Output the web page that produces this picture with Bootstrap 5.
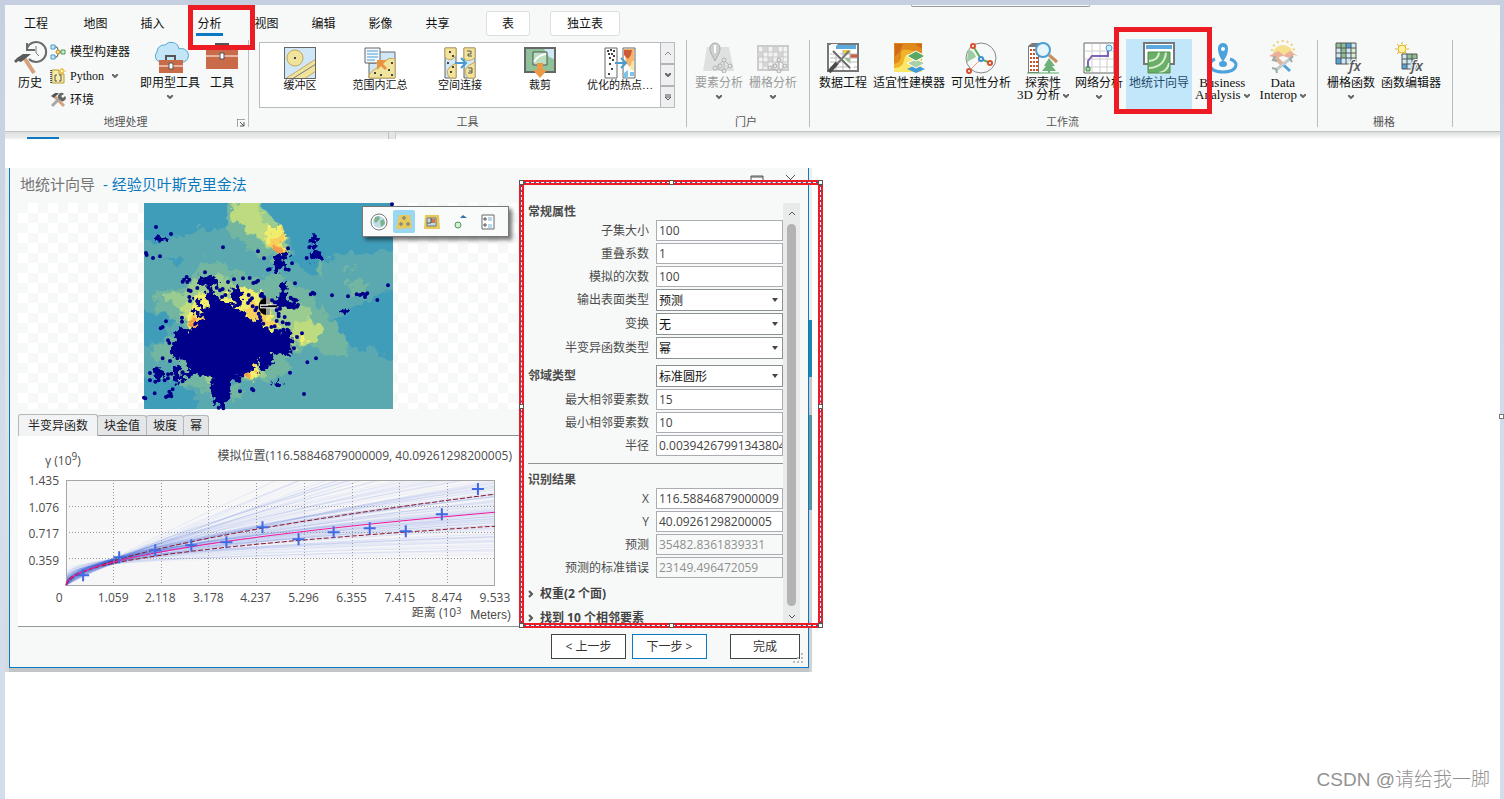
<!DOCTYPE html>
<html lang="zh-CN">
<head>
<meta charset="utf-8">
<meta name="viewport" content="width=device-width, initial-scale=1">
<title>地统计向导</title>
<link rel="stylesheet" href="https://cdn.jsdelivr.net/npm/bootstrap@5.3.0/dist/css/bootstrap.min.css">
<style>
:root{--line:#b9bdbf;--panel:#f7f9f8;--ink:#4c4c4c;--red:#ed1c24;--blue:#0a78c2}
body{background:linear-gradient(#c6cfe0,#d3ddec 60%);font-family:"Open Sans","Noto Sans CJK SC",sans-serif;font-size:12px;line-height:16px;color:#111;padding:5px 4px 0 5px}
button{font-family:inherit;color:inherit}
svg{display:block}
.ribbon{background:var(--panel);border-bottom:1px solid #bfc3c4;height:127px;font-family:"Liberation Serif","Noto Sans CJK SC",serif}
.searchstub{top:0;left:906px;width:179px;height:2px;border:1px solid #999;border-top:0;border-radius:0 0 3px 3px}
.tabrow{height:35px}
.tabrow .nav-link{width:57px;height:35px;padding:0;font-size:12px;line-height:38px;text-align:center;color:#111}
.tabrow .firsttab{width:62px}
.tabrow .nav-link.active span{display:inline-block;height:31px;border-bottom:3px solid var(--blue);padding:0 1px}
.tabrow .ctxtab{width:44px;height:25px;line-height:25px;background:#fff;border:1px solid #dcdedf;border-radius:3px;margin:6px 0 0 20px}
.tabrow .ctxwide{width:70px}
.redbox{border:5px solid var(--red);pointer-events:none;z-index:5}
.around-tab{left:7px;top:0;width:67px;height:45px}
.around-btn{left:-12px;top:-12px;width:98px;height:87px}
.rgroup{border-right:1px solid var(--line);height:87px}
.g-geo{padding:0 7px 0 5px}
.g-portal{padding:0 9px 0 5px}
.g-flow{padding:0 8px 0 6px}
.g-raster{padding:0 8px 0 6px}
.grow{height:72px}
.gname{font-size:11px;line-height:14px;color:#555;text-align:center;padding-top:3px}
.rbtn{background:none;border:0;padding:2px 3px 0;font-size:12px;line-height:12px;white-space:nowrap;display:flex;flex-direction:column;align-items:center;height:70px}
.rbtn svg.ic{margin-bottom:3px;flex:none;overflow:visible}
.lat{font-size:13px}
.rbtn.off{color:#9a9a9a}
.rbtn.hot{background:#c3e7fa;color:#1d4a6b;margin-top:-1px;padding-top:3px}
.sbtn{background:none;border:0;padding:0;height:24px;font-size:12px;display:flex;align-items:center;gap:4px;white-space:nowrap}
.smallcol{padding-right:7px}
.chev{width:6px;height:4px;flex:none}
.rbtn>.chev{margin-top:6px}
.rbtn span .chev{display:inline-block;margin-left:3px}
.launch{right:3px;bottom:0}
.gallery{border:1px solid #b9bcbd;background:#fff;height:66px;margin:2px 11px 0 10px}
.gitem{background:none;border:0;width:80px;padding:4px 0 0;font-size:11px;line-height:13px;white-space:nowrap;display:flex;flex-direction:column;align-items:center}
.gscroll button{border:0;border-left:1px solid #b0b4b8;background:#efeff1;width:14px;height:21px;padding:0;flex:1 1 0;display:flex;align-items:center;justify-content:center}
.gscroll button+button{border-top:2px solid #b0b4b8}
.understrip{height:7px;background:linear-gradient(#dadcdc,#fff)}
.understrip .pane{width:383px;background:linear-gradient(#dcdede,#f0f1f1);padding-left:22px}
.understrip .pane i{display:block;width:32px;height:2px;margin-top:5px;background:var(--blue)}
.understrip .split{width:8px;border-left:1px solid #c0c0c0;border-right:1px solid #d0d0d0;background:#e4e4e4}
.desk{background:#fff}
.backdrop{margin-top:29px;max-width:807px;padding:0 3px 4px 4px;background:linear-gradient(#e8e9ea,#d8d9da) left/4px 100% no-repeat,linear-gradient(#eeeff0 152px,#2484b0 152px 209px,#c8c8c8 209px 247px,#5d949e 247px 342px,#d2d2d2 342px) right/3px 100% no-repeat,#c3c4c5}
.dlg{background:var(--panel);border:1px solid var(--blue);border-top:0;color:var(--ink)}
.dlghead{height:35px;padding:0 10px;font-size:15px;line-height:32px;color:#757575}
.dlghead b{font-weight:400;color:#0a78be}
.leftcol{margin-left:8px;min-width:0}
.checker{height:206px;background:conic-gradient(#fff 25%,#f7f9f8 0 50%,#fff 0 75%,#f7f9f8 0) 0 0/20px 20px}
.mapbar{left:344px;top:3px;width:147px;height:31px;background:#f9fafa;border:1px solid #777;box-shadow:3px 3px 4px #0008;padding:0 5px;gap:6px}
.mapbar button{border:0;background:none;width:22px;height:23px;padding:2px 0;display:flex;justify-content:center;align-items:center;border-radius:2px}
.mapbar .on{background:#9ad7f3;margin-left:-3px}
.ctabs{height:27px;border-bottom:1px solid #8a8e90}
.ctabs button{border:1px solid #b5b8ba;border-bottom:0;border-radius:3px 3px 0 0;background:#e5e6e8;height:20px;padding:0 6px;font-size:12px;line-height:19px;margin-left:-1px;color:#222}
.ctabs button.active{height:22px;margin:0 0 -1px;padding:0 9px;background:#f2f3f4;line-height:21px}
.chartbox{background:#fff;border-bottom:1px solid #999}
.chartbox svg{width:100%;height:auto}
.props{width:289px;flex:none;height:424px}
.frame{left:0;top:-23px;width:304px;height:448px;border:5px solid var(--red);pointer-events:none;z-index:4}
.frame::before{content:"";position:absolute;inset:-3px;border:1px solid #2a5fa8}
.frame::after{content:"";position:absolute;inset:-3px;border:1px dashed #fff}
.frame i{position:absolute;width:5px;height:5px;background:#fff;border:1px solid #555;z-index:1}
.pform{padding:0 0 0 9px;width:264px}
.pform h2{font-size:12px;line-height:17px;font-weight:700;margin:0;height:17px}
.prow{display:grid;grid-template-columns:1fr 127px;column-gap:7px;margin-bottom:2px;align-items:center}
.prow label{text-align:right;line-height:20px}
.prow label.fw-bold{text-align:left}
.prow input,.prow select{width:100%;height:21px;border:1px solid #abadb3;border-radius:0;padding:0 0 0 2px;font-size:12px;line-height:19px;color:#444;background-color:#fff;outline:0}
.prow select{height:22px;color:#111;border-color:#8c9196;appearance:none;background:url("data:image/svg+xml,%3Csvg xmlns='http://www.w3.org/2000/svg' viewBox='0 0 6 4'%3E%3Cpath d='M0 0h6L3 4z' fill='%23444'/%3E%3C/svg%3E") right 4px top 8px/6px 4px no-repeat #fff}
.prow input:disabled{color:#8f8f8f;background:#f7f9f8}
.rule{border-top:1px solid #8f9496;margin:7px 0}
.pform .exp{border:0;background:none;padding:0;height:24px;font-size:12px;font-weight:700;display:flex;align-items:center;gap:5px;color:#444}
.vbar{width:17px;background:#e9eaea}
.vbar i{display:block;width:9px;background:#b3b3b3;border-radius:5px;flex:1}
.actions{height:40px;padding:7px 8px 0 0}
.actions button{height:25px;border:1px solid #444;border-radius:0;background:#fff;width:75px;padding:0;font-size:12px;line-height:20px;margin-right:6px;color:#333}
.actions .primary{border-color:#0a78c2;margin-right:23px}
.actions .last{width:70px;margin-right:0}
.grip{right:4px;bottom:3px}
.watermark{right:10px;bottom:6px;font-size:19px;line-height:26px;color:#929292;font-family:"Liberation Sans","Noto Sans CJK SC",sans-serif;font-weight:300}
.edgemark{right:-4px;bottom:380px;width:5px;height:5px;border:1px solid #777;background:#fff}
</style>
<script src="https://cdn.jsdelivr.net/npm/bootstrap@5.3.0/dist/js/bootstrap.bundle.min.js"></script>
</head>
<body class="d-flex flex-column min-vh-100">
<svg width="0" height="0" class="position-absolute" aria-hidden="true">
<symbol id="cv" viewBox="0 0 6 4"><path d="M0 0l3 3 3-3" fill="none" stroke="#666" stroke-width="2"/></symbol>
<symbol id="net" viewBox="0 0 22 16"><path d="M3 11L12 3M12 3l6 6M3 11l9 3 6-5M12 3v11" fill="none" stroke="#b5b5b5"/><g fill="#e4e4e4" stroke="#b0b0b0"><circle cx="12" cy="3" r="2"/><circle cx="3" cy="11" r="2"/><circle cx="18" cy="9" r="2"/><circle cx="12" cy="14" r="2"/><circle cx="8" cy="9" r="2"/></g></symbol>
</svg>
<header class="ribbon position-relative">
  <div class="searchstub position-absolute"></div>
  <nav class="nav tabrow flex-nowrap" aria-label="功能区">
    <a class="nav-link firsttab" href="#">工程</a><a class="nav-link" href="#">地图</a><a class="nav-link" href="#">插入</a>
    <a class="nav-link active position-relative" href="#"><span>分析</span><i class="redbox around-tab position-absolute"></i></a>
    <a class="nav-link" href="#">视图</a><a class="nav-link" href="#">编辑</a><a class="nav-link" href="#">影像</a><a class="nav-link" href="#">共享</a>
    <a class="nav-link ctxtab" href="#">表</a><a class="nav-link ctxtab ctxwide" href="#">独立表</a>
  </nav>
  <div class="d-flex">
    <section class="rgroup g-geo position-relative">
      <div class="grow d-flex">
        <button class="rbtn" type="button"><svg class="ic" width="34" height="32" viewBox="0 0 34 32"><path d="M14 6a10 10 0 1 1 2 11" fill="none" stroke="#6b6b6b" stroke-width="2"/><path d="M14 1v7h8" fill="none" stroke="#6b6b6b" stroke-width="2"/><path d="M23 4v7l3 3" fill="none" stroke="#777" stroke-width="1"/><path d="M12 17l9 14" stroke="#d8a07a" stroke-width="4"/><path d="M1 19l3-3 6-4h8l-6 5-4 3-3-1-2 2z" fill="#5a5a5a"/></svg>历史</button>
        <div class="smallcol d-flex flex-column">
          <button class="sbtn" type="button"><svg width="16" height="16" viewBox="0 0 16 16"><path d="M4 3h3l2 5M4 13h3l2-5h3" fill="none" stroke="#555"/><path d="M1 1h4v4H1zM1 11h4v4H1z" fill="#c7e8fa" stroke="#4a9bc9"/><circle cx="8" cy="8" r="2" fill="#efd783" stroke="#b8962e"/><path d="M11 6h4v4h-4z" fill="#cfeac9" stroke="#4f9a52"/></svg>模型构建器</button>
          <button class="sbtn lat" type="button"><svg width="16" height="16" viewBox="0 0 16 16"><path d="M2 2h7v4h5v9H2z" fill="#f5ecab" stroke="#b79d32"/><path d="M1 2v13" stroke="#555" stroke-width="2" stroke-dasharray="1 1"/><path d="M7 7H5v6h2M9 7h2v6H9" fill="none" stroke="#555"/><circle cx="12" cy="3" r="2" fill="#fff3a8" stroke="#e3b022"/><path d="M12 0v1M12 5v2M9 3H8M15 3h1" stroke="#e3b022"/></svg>Python<svg class="chev ms-1"><use href="#cv"/></svg></button>
          <button class="sbtn" type="button"><svg width="16" height="16" viewBox="0 0 16 16"><path d="M5 5l9 9" stroke="#d8a07a" stroke-width="3"/><path d="M1 4l4-3h4L6 4 4 6z" fill="#555"/><path d="M2 14l8-8" stroke="#a7a7a7" stroke-width="3"/><path d="M9 7a3 3 0 1 1 5-5l-3 2 2 2 2-2a3 3 0 0 1-5 4z" fill="#666"/></svg>环境</button>
        </div>
        <button class="rbtn" type="button"><svg class="ic" width="34" height="32" viewBox="0 0 34 32"><path d="M7 20a6 6 0 0 1-3-10 7 7 0 0 1 8-7 8 8 0 0 1 14 4 6 6 0 0 1 5 13z" fill="#c3e5f8" stroke="#5aa5d0"/><path d="M13 18v-4h9v4" fill="none" stroke="#555" stroke-width="2"/><path d="M6 18h24v13H6z" fill="#c96a49"/><path d="M6 24h24" stroke="#fff"/><path d="M16 21h4v6h-4z" fill="#fff" stroke="#555"/></svg>即用型工具<svg class="chev"><use href="#cv"/></svg></button>
        <button class="rbtn" type="button"><svg class="ic" width="32" height="32" viewBox="0 0 32 32"><path d="M10 8V2h12v6" fill="none" stroke="#555" stroke-width="2"/><path d="M0 8h32v19H0z" fill="#c96a49"/><path d="M0 14h32" stroke="#fff"/><path d="M14 11h4v6h-4z" fill="#fff" stroke="#555"/></svg>工具</button>
      </div>
      <div class="gname">地理处理</div>
      <svg class="launch position-absolute" width="8" height="8" viewBox="0 0 8 8"><path d="M0 8V0h8M3 3l4 4M7 3v4H3" fill="none" stroke="#555"/></svg>
    </section>
    <section class="rgroup">
      <div class="grow overflow-hidden">
        <div class="gallery d-flex">
          <button class="gitem" type="button"><svg width="32" height="32" viewBox="0 0 32 32"><path d="M0 0h32v32H0z" fill="#cfe7f7"/><circle cx="11" cy="11" r="8" fill="#f0e49c" stroke="#c7a65c"/><path d="M1 32l31-20v12L20 32z" fill="#f0e49c" stroke="#c7a65c"/><path d="M8 32l24-15" stroke="#777"/><path d="M10 10h2v2h-2z" fill="#444"/><path d="M0 0h32v32H0z" fill="none" stroke="#666" stroke-width="2"/></svg>缓冲区</button>
          <button class="gitem" type="button"><svg width="32" height="32" viewBox="0 0 32 32"><path d="M12 5h19v26H5V16h7z" fill="#cfe7f7" stroke="#666"/><path d="M5 31c0-8 8-9 12-13s6-8 14-6v19z" fill="#f0e49c" stroke="#c7a65c"/><path d="M1 1h15v15H1z" fill="#f4f9fd" stroke="#666"/><path d="M3 4h11M3 7h11M3 10h11M3 13h8" stroke="#4a9bd0"/><path d="M22 22l-7-7" stroke="#e8943f" stroke-width="3"/><path d="M13 13h10l-10 10z" fill="#e8943f"/><path d="M27 15h2v2h-2zM24 22h2v2h-2zM10 25h2v2h-2zM16 27h2v2h-2zM27 27h2v2h-2z" fill="#444"/></svg>范围内汇总</button>
          <button class="gitem" type="button"><svg width="32" height="32" viewBox="0 0 32 32"><path d="M1 1h11v30H1zM20 1h11v30H20z" fill="#cfe7f7" stroke="#666"/><path d="M1 1h11v8q-6 7-11 1zM12 16v15H6q-8-8 6-15zM20 1h11v10q-8 5-11 0zM31 15v16h-7q-9-9 7-16z" fill="#f0e49c" stroke="#c7a65c"/><path d="M5 4h2v2H5zM8 8h2v2H8zM3 15h2v2H3zM8 19h2v2H8zM6 24h2v2H6z" fill="#444"/><path d="M23 4h4v3h-3v2h4M24 21h4v3h-3M28 24v2h-4" fill="none" stroke="#555"/><path d="M11 16h10M17 11l5 5-5 5" fill="none" stroke="#4a9bd0" stroke-width="2"/></svg>空间连接</button>
          <button class="gitem" type="button"><svg width="32" height="32" viewBox="0 0 32 32"><path d="M1 1h30v24H1z" fill="#8fc19a" stroke="#666" stroke-width="2"/><path d="M20 2h10v10l-5-2z" fill="#cfeaf7"/><path d="M9 5h14v13H9z" fill="#b9dfc0" stroke="#555"/><path d="M10 15q4-7 12-8" fill="none" stroke="#fff" stroke-width="2"/><path d="M13 16h6v7h4l-7 8-7-8h4z" fill="#ee9a45"/></svg>裁剪</button>
          <button class="gitem" type="button"><svg width="32" height="32" viewBox="0 0 32 32"><path d="M1 1h12v30H1zM19 1h12v30H19z" fill="#fff" stroke="#666"/><path d="M3 3h2v2H3zM6 2h2v2H6zM9 3h2v2H9zM4 6h2v2H4zM7 6h2v2H7zM9 8h2v2H9zM5 10h2v2H5zM8 12h2v2H8zM5 16h2v2H5zM7 21h2v2H7zM4 26h2v2H4z" fill="#444"/><path d="M20 2h10v12l-4 6-4-4z" fill="#f5b56b"/><path d="M20 3h8l-1 5-3 4-4-4z" fill="#cc5a38"/><path d="M28 14h2v10l-4-2z" fill="#f8e7a3"/><path d="M20 26l4-3v8h-4zM26 25h4v4h-4z" fill="#7fc2ea"/><path d="M11 16h10M17 11l5 5-5 5" fill="none" stroke="#4a9bd0" stroke-width="2"/></svg>优化的热点…</button>
          <div class="gscroll d-flex flex-column ms-auto">
            <button type="button" aria-label="上"><svg width="6" height="4" viewBox="0 0 6 4"><path d="M0 4l3-3 3 3" fill="none" stroke="#888"/></svg></button>
            <button type="button" aria-label="下"><svg class="chev"><use href="#cv"/></svg></button>
            <button type="button" aria-label="更多"><svg width="6" height="7" viewBox="0 0 6 7"><path d="M0 1h6M0 3h6L3 6z" fill="none" stroke="#555"/></svg></button>
          </div>
        </div>
      </div>
      <div class="gname">工具</div>
    </section>
    <section class="rgroup g-portal">
      <div class="grow d-flex">
        <button class="rbtn off" type="button"><svg class="ic" width="32" height="32" viewBox="0 0 32 32"><path d="M4 5h22l5 24H0z" fill="#dfe0e0"/><path d="M12 19c-4-8-5-9-5-13a5 5 0 0 1 10 0c0 4-1 5-5 13z" fill="#cfd0d0" stroke="#aaa"/><path d="M11 3h2v8h-2z" fill="#fff"/><use href="#net" x="9" y="15" width="22" height="16"/></svg>要素分析<svg class="chev"><use href="#cv"/></svg></button>
        <button class="rbtn off" type="button"><svg class="ic" width="32" height="32" viewBox="0 0 32 32"><path d="M1 4h30v24H1z" fill="#f2f2f2" stroke="#ccc" stroke-width="2"/><path d="M6 5h5v5H6zM16 5h5v5h-5zM1 10h5v5H1zM21 10h5v5h-5zM11 15h5v5h-5zM6 20h5v5H6z" fill="#d6d6d6"/><path d="M1 10h30M1 15h30M1 20h30M6 4v24M11 4v24M16 4v24M21 4v24M26 4v24" stroke="#c8c8c8"/><use href="#net" x="10" y="15" width="22" height="16"/></svg>栅格分析<svg class="chev"><use href="#cv"/></svg></button>
      </div>
      <div class="gname">门户</div>
    </section>
    <section class="rgroup g-flow">
      <div class="grow d-flex">
        <button class="rbtn" type="button"><svg class="ic" width="32" height="32" viewBox="0 0 32 32"><path d="M1 2h30v27H1z" fill="#fff" stroke="#777" stroke-width="2"/><path d="M9 3h20v4H9z" fill="#5ba9dd"/><path d="M16 8h7v4h-7z" fill="#f0c93c"/><path d="M23 12h7v4h-7z" fill="#d35a3c"/><path d="M17 16h6v4h-6z" fill="#8cc68c"/><path d="M3 12h27M3 16h27M3 20h27M3 25h27M9 8v20M16 8v20M23 8v20" stroke="#bbb"/><path d="M4 2h7L2 12z" fill="#f7f9f8"/><path d="M6 8l17 17M6 8l-2 3M23 25l3-2" stroke="#fff" stroke-width="4"/><path d="M6 9l17 17" stroke="#666" stroke-width="2"/><path d="M22 9L10 22" stroke="#777" stroke-width="2"/><path d="M10 21l-8 9" stroke="#4a4a4a" stroke-width="4"/></svg>数据工程</button>
        <button class="rbtn" type="button"><svg class="ic" width="32" height="32" viewBox="0 0 32 32"><path d="M1 1h28v29H1z" fill="#e08a1e"/><path d="M1 22q8-2 7-9t8-5 13 3v19H1z" fill="#f2b32c"/><path d="M1 26q9 0 10-8t9-5 9 6v11H1z" fill="#fbe768"/><path d="M2 2h8l-4 9-4 3zM22 2h7v5z" fill="#cf6a16"/><path d="M14 27l9-4 9 4-9 4z" fill="#3f9bdc"/><path d="M14 21l9-4 9 4-9 5z" fill="#a9cfa9" stroke="#fff"/><path d="M14 14l9-5 9 5-9 5z" fill="#5aa866" stroke="#fff"/></svg>适宜性建模器</button>
        <button class="rbtn" type="button"><svg class="ic" width="32" height="32" viewBox="0 0 32 32"><circle cx="16" cy="16" r="15" fill="none" stroke="#888"/><path d="M3 8q5-1 8 7L2 20z" fill="#9ccc9f"/><path d="M8 4l8 13 9 4" fill="none" stroke="#59ad5d" stroke-width="2"/><path d="M16 17L4 29" stroke="#f09a8a"/><g fill="#fff" stroke="#d8502f" stroke-width="2"><circle cx="8" cy="4" r="2"/><circle cx="25" cy="21" r="2"/><circle cx="4" cy="29" r="2"/></g><circle cx="16" cy="17" r="2" fill="#fff" stroke="#3b8fd0" stroke-width="2"/></svg>可见性分析</button>
        <button class="rbtn" type="button"><svg class="ic" width="32" height="32" viewBox="0 0 32 32"><path d="M1 4l4-3h7v30H1z" fill="#7a7a7a"/><path d="M2 5h9v25H2z" fill="#fff"/><path d="M4 7v22M7 7v22M10 7v22" stroke="#c9502f" stroke-width="2" stroke-dasharray="2 2"/><path d="M0 31h32" stroke="#5aa866"/><path d="M22 16l6 8h-3l4 5h-6v2h-2v-2h-6l4-5h-2z" fill="#6db07a"/><circle cx="16" cy="8" r="7" fill="#e9f5fc" stroke="#4a9fd8" stroke-width="2"/><path d="M22 13l8 7" stroke="#c98d5f" stroke-width="3"/></svg>探索性<span><span class="lat">3D</span> 分析<svg class="chev"><use href="#cv"/></svg></span></button>
        <button class="rbtn" type="button"><svg class="ic" width="32" height="32" viewBox="0 0 32 32"><path d="M1 1h30v30H1z" fill="#fff" stroke="#666"/><path d="M2 9h28M2 17h28M2 25h28M9 2v28M17 2v28M24 2v28" stroke="#d0d0d0"/><path d="M5 26v-7l4-5h16V5" fill="none" stroke="#7d63b8" stroke-width="2"/><path d="M3 25h4v4H3z" fill="#a5d3a5" stroke="#3f8d49"/><circle cx="26" cy="6" r="3" fill="#cdeaf8" stroke="#4a9fd8"/></svg>网络分析<svg class="chev"><use href="#cv"/></svg></button>
        <button class="rbtn hot position-relative" type="button"><svg class="ic" width="32" height="32" viewBox="0 0 32 32"><path d="M1 1h30v21H1z" fill="#fff" stroke="#777" stroke-width="2"/><path d="M3 3h26v4H3z" fill="#5ba9dd"/><path d="M5 10h22v21H5z" fill="#6aae68"/><path d="M6 19q10-1 10-9M6 26q16-1 17-16M16 31q9-2 10-10" fill="none" stroke="#d9efd5" stroke-width="2"/><path d="M5 10h22v21H5z" fill="none" stroke="#4f8f4f"/></svg>地统计向导<i class="redbox around-btn position-absolute"></i></button>
        <button class="rbtn lat" type="button"><svg class="ic" width="32" height="32" viewBox="0 0 32 32"><path d="M9 17Q4 19 4 23q1 7 13 7t13-7q0-4-6-6" fill="none" stroke="#4ba3dc" stroke-width="3"/><ellipse cx="17" cy="22" rx="4" ry="3" fill="#4ba3dc"/><path d="M17 20c-3-5-5-8-5-14a5 5 0 0 1 10 0c0 6-2 9-5 14z" fill="#4ba3dc"/><circle cx="17" cy="7" r="2" fill="#fff"/></svg>Business<span>Analysis<svg class="chev"><use href="#cv"/></svg></span></button>
        <button class="rbtn lat ms-1" type="button"><svg class="ic" width="32" height="32" viewBox="0 0 32 32"><path d="M6 12a10 9 0 0 1 20 0z" fill="#f6e08e"/><path d="M5 9a11 10 0 0 1 22 0" fill="none" stroke="#f0cf7a" stroke-width="2" stroke-dasharray="2 3"/><path d="M2 14l9-5 6 4 6-4 8 5-4-1-5 3-6-2-7 2z" fill="#ecb09a"/><path d="M10 17l13 12" stroke="#4fa3d8" stroke-width="3"/><path d="M8 15l8 8" stroke="#e0b597" stroke-width="4"/><path d="M24 16L9 28" stroke="#c3c9cc" stroke-width="3"/><path d="M5 26l4 1 1 4M8 14l-2 4 4 1M26 14l-3 3 2 3" fill="none" stroke="#9aa" stroke-width="2"/></svg>Data<span>Interop<svg class="chev"><use href="#cv"/></svg></span></button>
      </div>
      <div class="gname">工作流</div>
    </section>
    <section class="rgroup g-raster">
      <div class="grow d-flex">
        <button class="rbtn" type="button"><svg class="ic" width="32" height="32" viewBox="0 0 32 32"><path d="M1 1h20v21H1z" fill="#cdeaf6"/><path d="M1 1h10v5H1zM6 6h5v10H6z" fill="#8fbf95"/><path d="M11 1h5v5h-5zM1 16h5v6H1z" fill="#55a2d8"/><path d="M16 6h5v10h-5z" fill="#d8efd2"/><path d="M1 1h20v21H1zM1 6h20M1 11h20M1 16h20M6 1v21M11 1v21M16 1v21" fill="none" stroke="#555"/><text x="14" y="29" font-family="Open Sans" font-style="italic" font-weight="600" font-size="14" fill="#555" stroke="#f7f9f8" stroke-width="2" paint-order="stroke">fx</text></svg>栅格函数<svg class="chev"><use href="#cv"/></svg></button>
        <button class="rbtn" type="button"><svg class="ic" width="32" height="32" viewBox="0 0 32 32"><circle cx="7" cy="7" r="4" fill="#fff3a8" stroke="#e3b022"/><path d="M7 0v2M7 12v2M0 7h2M12 7h2M2 2l2 2M12 12l-2-2M2 12l2-2M12 2l-2 2" stroke="#e3b022"/><path d="M7 12h15v15H7z" fill="#cdeaf6"/><path d="M12 12h10v5H12z" fill="#8fbf95"/><path d="M7 22h5v5H7z" fill="#55a2d8"/><path d="M7 12h15v15H7zM7 17h15M7 22h15M12 12v15M17 12v15" fill="none" stroke="#555"/><text x="16" y="29" font-family="Open Sans" font-style="italic" font-weight="600" font-size="14" fill="#555" stroke="#f7f9f8" stroke-width="2" paint-order="stroke">fx</text></svg>函数编辑器</button>
      </div>
      <div class="gname">栅格</div>
    </section>
  </div>
</header>
<div class="understrip d-flex"><div class="pane"><i></i></div><div class="split"></div></div>
<main class="desk flex-grow-1 position-relative">
  <div class="backdrop">
    <div class="dlg position-relative">
      <div class="dlghead d-flex">
        <span class="me-2">地统计向导</span><b>- 经验贝叶斯克里金法</b>
        <svg class="ms-auto mt-1" width="48" height="9" viewBox="0 0 48 9"><path d="M1 9V4h12v5M1 5h12M36 3l7 7M45 3l-7 7" fill="none" stroke="#555"/></svg>
      </div>
      <div class="d-flex">
        <div class="leftcol flex-grow-1">
          <div class="checker position-relative d-flex justify-content-center">
            <svg id="map" width="249" height="206" viewBox="12 8 747 618" overflow="visible">
              <filter id="rough" x="0" y="0" width="1" height="1"><feTurbulence type="fractalNoise" baseFrequency=".035" numOctaves="3" seed="4"/><feDisplacementMap in="SourceGraphic" scale="55" xChannelSelector="R" yChannelSelector="G"/></filter>
              <filter id="rough2" x="-.1" y="-.1" width="1.2" height="1.2"><feTurbulence type="fractalNoise" baseFrequency=".07" numOctaves="2" seed="9"/><feDisplacementMap in="SourceGraphic" scale="34" xChannelSelector="R" yChannelSelector="G"/></filter>
              <clipPath id="mapedge"><path d="M12 8h747v618H12z"/></clipPath>
              <path fill="#5aa9b0" d="M12 8h747v618H12z"/>
              <g clip-path="url(#mapedge)"><g filter="url(#rough)">
              <path fill="#5aa9b0" d="M-40-40h860v730H-40z"/>
              <g fill="#419dba"><path d="M-30-30h310v38l-10 30-8 34-22 6-24 16-40-8-30 10-36 18-40 6-100 22z"/><path d="M345-30h454v188l-70-4-24 12-60-10-50 8-46 10-10 46-20 8-70-44 6-54-20-34-44-28-20-34z"/><path d="M799 260l-100 26-74 48-70 52 12 22 90 36 54 10 88 50zM-30 310l92 34 50 6-34 40-2 32-106 20zM-30 526l82 0 120 54v106H-30zM60 170l60 6 26 4-20 10-16 8-30-20z"/></g>
              <g fill="#72b5a0"><path d="M40 270l80 0 60-60 8-30 60 0 30 40 60 10 80-6 60 40 40 12 34 60 36 40 28 54 10 46-60-10-60-30-50 30-30 60-60 20-60-10-40-20-20 40-24 30-40-20-60-10-20-40 30-30-90-4-6-30 40-30 60-20-30-50-52-20z"/><path d="M280-30l-14 78-8 50 50 28 60 40 60 20 20-50-20-60-60-50-12-56z"/><path d="M530 190l10-20 12 40 2 20-24-10zM600 215l60-25-40 30zM626 240l30-8 26 20-4 26-24 12-30-24zM216 570l60-14 40 20-14 20-50 6-24-14z"/></g>
              <g fill="#9acb91"><path d="M60 285l70-6 44-40 60-24 70 50 40 10 50 30 70 0 40 20 20 30 24 24-34 40-40 24-30-10-50 26-20 60-40 14-60-40-50 20-16 40-30-26 20-30-60-30-10-50 20-50-40-50z"/><path d="M290-20l-14 80 60 40 60 50 40 10 10-40-30-50-40-30-22-60z"/></g>
              <g fill="#bfdb80"><path d="M286-20h58l22 78 44 40-6 50-44-36-80-50z"/><path d="M120 320l70-50 40 10-10 60-70 40zM460 380l40-26 44 16 8 28-56 40-34-14z"/></g>
              <g fill="#f0ee6c"><path d="M370 110l40-40 30 24 2 20-14 44-30-14zM144 340l20-60 50 10 40 0 60-30 50 20 20 40 30 50-60 60H190l-50-30zM306 490l50-4-8 44-14 8zM466 410l20-4 10 20-24 6zM205 450l20 10-6 30-14-20z"/></g>
              <g fill="#f9cf5c"><path d="M390 130l36-50 16 20-16 50-20 20zM140 366l20-20 60 0-14 30-40 6zM316 320l18-26 40 50 30 2 4 30-50 0-34-26zM312 500l40-2-20 30z"/></g>
              <g fill="#f39a48"><path d="M390 146l20-16 14 0-10 30-20-6zM142 362l30-2-8 24-14-4zM200 350l10-8 6 14-12 4zM318 504l20 6-10 14z"/></g>
              </g></g>
              <g fill="#00008b" stroke="#00008b" stroke-width="6" stroke-linejoin="round" filter="url(#rough2)">
                <path d="M210 310l24-14 14 18 20-6 14 16 30 14 18 24 26 4 14 20 34 10 50 0v64l-50-4-24 0-20 14-24 4-4 40-20 10-40 4-4 56-22 30-22-8-12-60 14-14-34-10-38-10-22-40-30-2-10-24 20-26 34-10 14-30 30-20z"/>
                <path d="M178 236l20-2 14-8 12 10 10 10-22 8-24-2zM200 285l16-18 10 20-4 24-16-2zM274 266l20-4 10 18-2 34-16 4-6-16zM404 172l24-12 18 0-18 24-6 26h-14zM420 300l4-46 14-8-4 50 10 14 26-10 4 14-20 8-14-8-22 6-18-10zM516 108l18 0-12 18 2 16 20 12-4 20-26 6-8-6 14-16-2-30zM44 114l14-6 18 6-12 12-14-6zM104 400l22-14 20 14 20 8-6 20-30 6-20-10zM150 456l30-6 20 10-6 44 0 14-48 0 16-26zM40 520l10-18 20 14-2 16-20 2zM100 500l14 0 2 26 20-8 16 4-36 14-8 20zM230 560l14-4 8 12-6 10-14-6zM406 548l8-6 8 8-4 8-10-2zM608 334l14-8 2 8-10 10zM152 330l26 10 20-6 4 8-30 6zM164 300l16-2 10 24 24 6-6 6-24-6zM365 466l20-12 12 18-8 24-28 14zM328 480l8-10 20-16 2 10-14 30z"/>
              </g>
              <path id="pts" fill="none" stroke="#00008b" stroke-width="12" stroke-linecap="round"/>
              <path d="M380 292v52a24 26 0 0 1 0-52z" fill="#000"/><path d="M378 292h12v52h-12z" fill="#999"/><path d="M360 312h50v12h-50z" fill="#fff"/><path d="M362 316h22v5h-22zM384 315h27v6h-27z"/>
            </svg>
            <div class="mapbar position-absolute d-flex align-items-center">
              <button type="button" aria-label="底图"><svg width="18" height="18" viewBox="0 0 18 18"><circle cx="9" cy="9" r="8" fill="#fff" stroke="#777"/><circle cx="9" cy="9" r="6" fill="#bfdcea"/><path d="M5 4l4-1 1 3-4 4-2-2zM10 8l4-2 1 5-4 3z" fill="#7db58a"/></svg></button>
              <button type="button" class="on" aria-label="点"><svg width="18" height="16" viewBox="0 0 18 16"><path d="M4 1l11 0 2 13-16 1z" fill="#e5c95d"/><path d="M8 3h2v2H8zM5 9h2v2H5zM12 9h2v2h-2z" fill="#fff" stroke="#666"/></svg></button>
              <button type="button" aria-label="范围"><svg width="18" height="16" viewBox="0 0 18 16"><path d="M2 1h14l1 14H1z" fill="#e5c95d"/><path d="M4 4h9v8H4z" fill="#bcdcea" stroke="#777"/><path d="M8 5h4v4H8z" fill="#d8743f"/><path d="M4 9h4V4" fill="none" stroke="#555"/></svg></button>
              <button type="button" aria-label="值"><svg width="16" height="16" viewBox="0 0 16 16"><circle cx="6" cy="11" r="3" fill="#d6efcf" stroke="#4f9460"/><path d="M8 4l3-3 4 3z" fill="#2f74a8"/></svg></button>
              <button type="button" aria-label="图例"><svg width="14" height="16" viewBox="0 0 14 16"><path d="M1 1h12v14H1z" fill="#fff" stroke="#666"/><path d="M3 4h2v2H3zM3 10h2v2H3z" fill="#fff" stroke="#555"/><path d="M7 4h4M7 6h4M7 11h4M7 13h4" stroke="#6cb2dd"/></svg></button>
            </div>
          </div>
          <div class="ctabs d-flex align-items-end" role="tablist">
            <button class="active" type="button" role="tab">半变异函数</button><button type="button" role="tab">块金值</button><button type="button" role="tab">坡度</button><button type="button" role="tab">幂</button>
          </div>
          <div class="chartbox">
            <svg id="chart" viewBox="18 436 500 190" font-size="12" fill="#4c4c4c">
              <clipPath id="plot"><path d="M66 480h428v105H66z"/></clipPath>
              <path d="M66 480h428v105H66z" fill="#f7f7f8"/>
              <g id="fan" clip-path="url(#plot)" fill="none" stroke="#4169e1"></g>
              <path d="M113 480v105M161 480v105M208 480v105M256 480v105M304 480v105M352 480v105M399 480v105M447 480v105M66 506h428M66 532h428M66 558h428" stroke="#999" stroke-dasharray="1 2" shape-rendering="crispEdges"/>
              <path d="M66 480h428v105H66z" fill="none" stroke="#a6a6a6" shape-rendering="crispEdges"/>
              <g fill="none"><path id="up" stroke="#8b1a2b" stroke-dasharray="5 2"/><path id="lo" stroke="#8b1a2b" stroke-dasharray="5 2"/><path id="mid" stroke="#f0189c"/></g>
              <path id="plus" fill="none" stroke="#4169e1" stroke-width="2"/>
              <g text-anchor="end"><text x="59" y="485">1.435</text><text x="59" y="512">1.076</text><text x="59" y="538">0.717</text><text x="59" y="565">0.359</text></g>
              <g text-anchor="middle"><text x="59" y="602">0</text><text x="113" y="602">1.059</text><text x="160" y="602">2.118</text><text x="208" y="602">3.178</text><text x="255" y="602">4.237</text><text x="303" y="602">5.296</text><text x="351" y="602">6.355</text><text x="399" y="602">7.415</text><text x="446" y="602">8.474</text><text x="494" y="602">9.533</text></g>
              <text x="45" y="465">γ (10<tspan dy="-5" font-size="10">9</tspan><tspan dy="5">)</tspan></text>
              <text x="511" y="460" text-anchor="end">模拟位置(116.58846879000009, 40.09261298200005)</text>
              <text x="411" y="617">距离 (10<tspan dy="-3" font-size="9">3</tspan></text><text x="510" y="619" text-anchor="end" font-family="Liberation Sans">Meters)</text>
            </svg>
          </div>
        </div>
        <div class="props position-relative d-flex">
          <form class="pform" onsubmit="return false">
            <h2>常规属性</h2>
            <div class="prow"><label for="a1">子集大小</label><input id="a1" value="100"></div>
            <div class="prow"><label for="a2">重叠系数</label><input id="a2" value="1"></div>
            <div class="prow"><label for="a3">模拟的次数</label><input id="a3" value="100"></div>
            <div class="prow"><label for="a4">输出表面类型</label><select id="a4"><option>预测</option></select></div>
            <div class="prow"><label for="a5">变换</label><select id="a5"><option>无</option></select></div>
            <div class="prow"><label for="a6">半变异函数类型</label><select id="a6"><option>幂</option></select></div>
            <div class="prow pt-1"><label for="a7" class="fw-bold">邻域类型</label><select id="a7"><option>标准圆形</option></select></div>
            <div class="prow"><label for="a8">最大相邻要素数</label><input id="a8" value="15"></div>
            <div class="prow"><label for="a9">最小相邻要素数</label><input id="a9" value="10"></div>
            <div class="prow"><label for="a10">半径</label><input id="a10" value="0.0039426799134380493"></div>
            <div class="rule"></div>
            <h2>识别结果</h2>
            <div class="prow"><label for="b1">X</label><input id="b1" value="116.58846879000009"></div>
            <div class="prow"><label for="b2">Y</label><input id="b2" value="40.09261298200005"></div>
            <div class="prow"><label for="b3">预测</label><input id="b3" value="35482.8361839331" disabled></div>
            <div class="prow"><label for="b4">预测的标准错误</label><input id="b4" value="23149.496472059" disabled></div>
            <button class="exp mt-1" type="button"><svg width="7" height="8" viewBox="0 0 7 8"><path d="M1 1l3 3-3 3" fill="none" stroke="#555" stroke-width="2"/></svg>权重(2 个面)</button>
            <button class="exp" type="button"><svg width="7" height="8" viewBox="0 0 7 8"><path d="M1 1l3 3-3 3" fill="none" stroke="#555" stroke-width="2"/></svg>找到 10 个相邻要素</button>
          </form>
          <div class="vbar d-flex flex-column align-items-center gap-2 py-2"><svg width="8" height="5" viewBox="0 0 8 5"><path d="M1 4l3-3 3 3" fill="none" stroke="#555"/></svg><i></i><svg width="8" height="5" viewBox="0 0 8 5"><path d="M1 1l3 3 3-3" fill="none" stroke="#555"/></svg></div>
          <div class="frame position-absolute"><i style="left:-5px;top:-5px"></i><i style="left:calc(50% - 2px);top:-5px"></i><i style="right:-5px;top:-5px"></i><i style="left:-5px;top:50%"></i><i style="right:-5px;top:50%"></i><i style="left:-5px;bottom:-5px"></i><i style="left:calc(50% - 2px);bottom:-5px"></i><i style="right:-5px;bottom:-5px"></i></div>
        </div>
      </div>
      <div class="actions d-flex justify-content-end">
        <button type="button">&lt; 上一步</button><button type="button" class="primary">下一步 &gt;</button><button type="button" class="last">完成</button>
      </div>
      <svg class="grip position-absolute" width="11" height="11" viewBox="0 0 11 11"><path d="M8 0h2v2H8zM4 4h2v2H4zM8 4h2v2H8zM0 8h2v2H0zM4 8h2v2H4zM8 8h2v2H8z" fill="#bbb"/></svg>
    </div>
  </div>
  <i class="edgemark position-absolute"></i>
  <div class="watermark position-absolute">CSDN @请给我一脚</div>
</main>
<script>
// sample points, x y in map units
const pts='48 80 93 101 18 158 20 164 39 173 60 168 249 141 354 153 372 174 384 208 389 207 437 207 446 208 444 144 456 189 500 173 508 141 465 249 518 277 512 282 523 280 576 285 624 288 650 282 660 284 668 280 675 290 682 279 678 282 712 299 744 255 756 12 195 216 264 245 282 237 309 234 329 233 340 248 348 246 354 241 132 238 140 230 148 238 142 245 128 244 146 270 152 272 150 302 148 290 172 263 126 352 126 364 78 363 62 384 68 380 84 420 88 428 102 430 132 444 118 460 128 466 112 474 90 482 68 474 30 518 30 540 56 540 46 544 74 540 84 534 84 522 95 520 128 516 128 543 98 567 88 574 92 580 94 588 84 587 78 590 44 579 12 592 16 594 236 622 250 624 300 573 336 566 340 570 282 532 290 540 298 542 290 528 298 534 228 526 240 540 246 542 450 517 492 581 502 486 528 474 471 410 486 399 462 444 408 453 414 453 420 453 434 350 416 348 410 362 428 366 440 370 446 370 404 378 420 392 430 388 442 388 446 392 410 330 420 325 416 340 366 280 372 290 362 286 326 284 336 294 330 300 324 308 338 318 350 322 346 330 356 340 360 350 362 360 370 370 394 380 380 384 398 404 380 402 368 402 346 398 350 410 240 270 248 266 256 284 246 290 230 262 206 262 212 270 180 244 188 250 230 320 214 310 452 292 460 298 468 300 474 314 462 322 452 320 396 300 404 306 430 314 182 470 176 448 170 438 188 448 190 486 160 452 362 454 372 456 380 462 348 470 332 474 376 480 388 490 386 470 366 502 332 462';
const n=pts.split(' ');let d='';for(let i=0;i<n.length;i+=2)d+=`M${n[i]} ${n[i+1]}h0`;
document.getElementById('pts').setAttribute('d',d);
// power-model curves
const curve=(a,p)=>{let s='M66 585';for(let i=1;i<=60;i++){const t=(i/60)**2;s+=`L${66+428*t} ${585-a*t**p}`}return s};
for(const [id,a,p] of [['up',91,.6],['mid',73,.52],['lo',59,.45]])document.getElementById(id).setAttribute('d',curve(a,p));
let seed=7,rnd=()=>(seed=(seed*16807)%2147483647)/2147483647,out='';
for(let i=0;i<150;i++){const p=.52+(rnd()+rnd()+rnd()-1.5)*.34+(i%5?0:.2*rnd());out+=`<path d="${curve((21+rnd()*6)*9.09**p,p)}" opacity="${.02+.08*rnd()}"/>`}
document.getElementById('fan').innerHTML=out;
document.getElementById('plus').setAttribute('d',[[83,575],[119,557],[155,550],[191,545],[226,542],[262,527],[298,539],[333,532],[369,528],[405,531],[441,514],[477,489]].map(([x,y])=>`M${x-6} ${y}h12M${x} ${y-6}v12`).join(''));
</script>
</body>
</html>
